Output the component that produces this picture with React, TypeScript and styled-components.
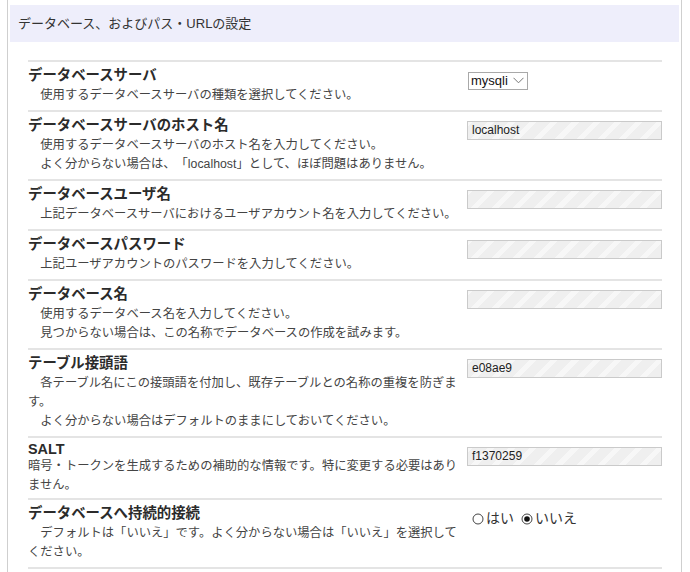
import styled, { createGlobalStyle } from 'styled-components';

const GlobalStyle = createGlobalStyle`
  body {
    margin: 0;
    background: #fff;
    font-family: 'Liberation Sans', 'Noto Sans CJK JP', sans-serif;
    color: #333;
    text-spacing-trim: space-all;
  }
`;

const Page = styled.div`
  padding-left: 7px;
  height: 572px;
  overflow: hidden;
`;

const Panel = styled.section`
  box-sizing: border-box;
  width: 675px;
  min-height: 572px;
  border-left: 1px solid #cfcfcf;
  border-right: 1px solid #cfcfcf;
  padding: 5px 2px 0 2px;
`;

const Header = styled.h2`
  margin: 0;
  height: 37px;
  display: flex;
  align-items: center;
  padding: 0 0 3px 8px;
  box-sizing: border-box;
  background: #eeeefb;
  font-size: 13px;
  font-weight: normal;
  color: #333;
`;

const Table = styled.div`
  margin: 18px 0 0 18px;
  width: 634px;
  border-bottom: 2px solid #e4e4e4;
`;

const Row = styled.div`
  display: grid;
  grid-template-columns: 434px 195px;
  column-gap: 5px;
  border-top: 2px solid #e4e4e4;
`;

const Label = styled.div<{ $compact?: boolean }>`
  padding: ${(p) => (p.$compact ? '3px 0 3px' : '3px 0 5px')};
`;

const Title = styled.div<{ $compact?: boolean }>`
  font-size: 14.4px;
  font-weight: bold;
  line-height: ${(p) => (p.$compact ? '16px' : '21px')};
  color: #2b2b2b;
`;

const Desc = styled.div`
  font-size: 12.3px;
  line-height: 19px;
  color: #444;
`;

const Field = styled.div`
  padding-top: 9px;
`;

const TextInput = styled.div`
  box-sizing: border-box;
  width: 195px;
  height: 19px;
  border: 1px solid #cacaca;
  padding: 0 4px;
  font-size: 12px;
  line-height: 17px;
  color: #222;
  background: repeating-linear-gradient(
    -45deg,
    #efefef 0px,
    #efefef 10px,
    #f7f7f7 10px,
    #f7f7f7 15px
  );
`;

const Select = styled.div`
  box-sizing: border-box;
  display: inline-flex;
  align-items: center;
  gap: 5px;
  height: 18px;
  margin-left: 1px;
  padding: 0 3px 0 2px;
  border: 1px solid #a9a9a9;
  font-size: 13px;
  color: #111;
  background: #fff;
`;

const Radios = styled.div`
  display: flex;
  gap: 7px;
  padding-left: 5px;
  font-size: 14px;
  line-height: 19px;
  color: #333;
`;

const RadioItem = styled.label`
  display: inline-flex;
  align-items: center;
  gap: 2px;
`;

function Chevron() {
  return (
    <svg width="11" height="7" viewBox="0 0 11 7">
      <path d="M0.5 0.8 L5.5 5.8 L10.5 0.8" fill="none" stroke="#777" strokeWidth="1" />
    </svg>
  );
}

function RadioMark({ checked }: { checked?: boolean }) {
  return (
    <svg width="12" height="12" viewBox="0 0 12 12">
      <circle cx="6" cy="6" r="5" fill="#fff" stroke="#444" strokeWidth="1" />
      {checked && <circle cx="6" cy="6" r="2.8" fill="#111" />}
    </svg>
  );
}

type Setting = {
  title: string;
  desc: string[];
  compact?: boolean;
  field: 'select' | 'text' | 'radio';
  value?: string;
};

const settings: Setting[] = [
  {
    title: 'データベースサーバ',
    desc: ['　使用するデータベースサーバの種類を選択してください。'],
    field: 'select',
    value: 'mysqli',
  },
  {
    title: 'データベースサーバのホスト名',
    desc: [
      '　使用するデータベースサーバのホスト名を入力してください。',
      '　よく分からない場合は、「localhost」として、ほぼ問題はありません。',
    ],
    field: 'text',
    value: 'localhost',
  },
  {
    title: 'データベースユーザ名',
    desc: ['　上記データベースサーバにおけるユーザアカウント名を入力してください。'],
    field: 'text',
  },
  {
    title: 'データベースパスワード',
    desc: ['　上記ユーザアカウントのパスワードを入力してください。'],
    field: 'text',
  },
  {
    title: 'データベース名',
    desc: [
      '　使用するデータベース名を入力してください。',
      '　見つからない場合は、この名称でデータベースの作成を試みます。',
    ],
    field: 'text',
  },
  {
    title: 'テーブル接頭語',
    desc: [
      '　各テーブル名にこの接頭語を付加し、既存テーブルとの名称の重複を防ぎます。',
      '　よく分からない場合はデフォルトのままにしておいてください。',
    ],
    field: 'text',
    value: 'e08ae9',
  },
  {
    title: 'SALT',
    desc: ['暗号・トークンを生成するための補助的な情報です。特に変更する必要はありません。'],
    compact: true,
    field: 'text',
    value: 'f1370259',
  },
  {
    title: 'データベースへ持続的接続',
    desc: ['　デフォルトは「いいえ」です。よく分からない場合は「いいえ」を選択してください。'],
    field: 'radio',
  },
];

function SettingField({ setting }: { setting: Setting }) {
  if (setting.field === 'select') {
    return (
      <Select>
        {setting.value}
        <Chevron />
      </Select>
    );
  }
  if (setting.field === 'radio') {
    return (
      <Radios>
        <RadioItem>
          <RadioMark />
          はい
        </RadioItem>
        <RadioItem>
          <RadioMark checked />
          いいえ
        </RadioItem>
      </Radios>
    );
  }
  return <TextInput>{setting.value}</TextInput>;
}

export default function App() {
  return (
    <>
      <GlobalStyle />
      <Page>
        <Panel>
          <Header>データベース、およびパス・URLの設定</Header>
          <Table>
            {settings.map((s) => (
              <Row key={s.title}>
                <Label $compact={s.compact}>
                  <Title $compact={s.compact}>{s.title}</Title>
                  {s.desc.map((line) => (
                    <Desc key={line}>{line}</Desc>
                  ))}
                </Label>
                <Field>
                  <SettingField setting={s} />
                </Field>
              </Row>
            ))}
          </Table>
        </Panel>
      </Page>
    </>
  );
}
